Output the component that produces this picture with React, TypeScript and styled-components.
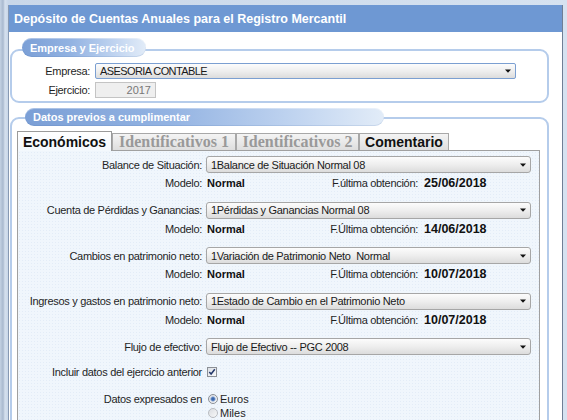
import styled, { createGlobalStyle } from 'styled-components';

const GlobalStyle = createGlobalStyle`
  html, body {
    margin: 0;
    padding: 0;
  }
  body {
    width: 567px;
    height: 420px;
    overflow: hidden;
    font-family: 'Liberation Sans', Arial, sans-serif;
    font-size: 11px;
    color: #1f1f1f;
    background: #d3dfee;
  }
  * {
    box-sizing: border-box;
  }
`;

const Frame = styled.div`
  height: 420px;
  padding: 5px 4px 0 8px;
  background: linear-gradient(to right, #c3d1e3 0, #a9b9cf 3px, #d5e0ee 5px, #c9d7e9 8px, #d6e2f0 100%);
`;

const Dialog = styled.div`
  height: 415px;
  display: flex;
  flex-direction: column;
  background: #fff;
  border-left: 1px solid #8799b3;
  border-right: 1px solid #6f7f95;
  overflow: hidden;
`;

const TitleBar = styled.div`
  height: 27px;
  flex-shrink: 0;
  display: flex;
  align-items: center;
  padding-left: 5px;
  background: #6e98d3;
  color: #fff;
  font-size: 12.5px;
  font-weight: bold;
`;

const Body = styled.div`
  display: flex;
  flex-direction: column;
  gap: 14px;
  padding: 17px 13px 0 1px;
`;

const Group = styled.section<{ $grow?: boolean }>`
  border: 2px solid #b5cceb;
  border-radius: 9px;
  background: #fff;
  flex-grow: ${({ $grow }) => ($grow ? 1 : 0)};
  min-height: ${({ $grow }) => ($grow ? '320px' : 'auto')};
`;

const Legend = styled.div<{ $width: number; $offset: number; $lift: number; $height: number }>`
  width: ${({ $width }) => $width}px;
  height: ${({ $height }) => $height}px;
  margin: -${({ $lift }) => $lift}px 0 0 ${({ $offset }) => $offset}px;
  padding-left: 8px;
  display: flex;
  align-items: center;
  border-radius: 10px;
  background: linear-gradient(90deg, #7b9fd6 0%, #93b3e2 40%, #c0d4f0 75%, #e2ecf8 100%);
  box-shadow: inset 0 1px 0 rgba(255, 255, 255, 0.35), inset 0 -1px 0 rgba(70, 110, 170, 0.15);
  color: #fff;
  font-size: 11px;
  font-weight: bold;
  white-space: nowrap;
`;

const FormGrid = styled.div`
  display: grid;
  grid-template-columns: 78px 421px;
  column-gap: 5px;
  row-gap: 3px;
  align-items: center;
  margin-top: 6px;
  padding-bottom: 3px;
`;

const FieldLabel = styled.span`
  text-align: right;
  white-space: nowrap;
  line-height: 14px;
  letter-spacing: -0.3px;
`;

const SelectBox = styled.div<{ $height: number; $focused?: boolean }>`
  height: ${({ $height }) => $height}px;
  display: flex;
  align-items: center;
  justify-content: space-between;
  padding: 0 4px;
  border: 1px solid ${({ $focused }) => ($focused ? '#7b9fd1' : '#a6a6a6')};
  border-radius: ${({ $focused }) => ($focused ? '2px' : '3px')};
  background: linear-gradient(#fcfcfc 0%, #eeeeee 50%, #dcdcdc 100%);
  color: #1a1a1a;
`;

const SelectText = styled.span<{ $tight?: boolean }>`
  white-space: pre;
  line-height: 14px;
  letter-spacing: ${({ $tight }) => ($tight ? '-0.6px' : '-0.3px')};
`;

const YearInput = styled.div`
  width: 61px;
  height: 16px;
  padding-right: 4px;
  border: 1px solid #c4c4c4;
  background: #efefef;
  color: #777;
  text-align: right;
  line-height: 14px;
`;

const GroupInner = styled.div`
  padding: 0 7px 0 5px;
`;

const TabBar = styled.div`
  display: flex;
  align-items: flex-end;
  margin-top: 5px;
`;

const Tab = styled.div<{ $width: number; $active?: boolean; $disabled?: boolean }>`
  position: relative;
  z-index: ${({ $active }) => ($active ? 1 : 0)};
  width: ${({ $width }) => $width}px;
  height: ${({ $active }) => ($active ? 20 : 17)}px;
  margin-bottom: ${({ $active }) => ($active ? -1 : 0)}px;
  display: flex;
  align-items: center;
  justify-content: center;
  border: 1px solid ${({ $active }) => ($active ? '#9a9a9a' : '#a8a8a8')};
  border-bottom: none;
  background: ${({ $active }) =>
    $active ? 'linear-gradient(#ffffff, #f3f8fd)' : 'linear-gradient(#f4f4f4, #dedede)'};
  color: ${({ $disabled }) => ($disabled ? '#999' : '#111')};
  font-family: ${({ $disabled }) =>
    $disabled ? "'Liberation Serif', 'Times New Roman', serif" : "'Liberation Sans', Arial, sans-serif"};
  font-size: ${({ $disabled }) => ($disabled ? 16 : 14)}px;
  font-weight: bold;
  white-space: nowrap;
`;

const Panel = styled.div`
  display: flex;
  flex-direction: column;
  min-height: 280px;
  padding: 5px 7px 0 0;
  border: 1px solid #a0a0a0;
  background-color: #f0f6fc;
  background-image: radial-gradient(#e3ecf7 0.6px, transparent 0.8px);
  background-size: 3px 3px;
`;

const Row = styled.div<{ $gap: number; $top?: boolean }>`
  display: grid;
  grid-template-columns: 184px 325px;
  column-gap: 4px;
  align-items: ${({ $top }) => ($top ? 'start' : 'center')};
  margin-top: ${({ $gap }) => $gap}px;
`;

const InfoValues = styled.div`
  display: grid;
  grid-template-columns: 60px 152px auto;
  align-items: center;
  height: 14px;
`;

const Strong = styled.span`
  font-weight: bold;
  color: #111;
  padding-left: 1px;
`;

const InfoLabel = styled.span`
  text-align: right;
  white-space: nowrap;
  letter-spacing: -0.3px;
`;

const DateValue = styled.span`
  margin-left: 6px;
  font-size: 12.5px;
  font-weight: bold;
  color: #111;
`;

const CheckWrap = styled.div`
  height: 14px;
  display: flex;
  align-items: center;
  padding-left: 1px;
`;

const RadioList = styled.div`
  display: flex;
  flex-direction: column;
`;

const RadioItem = styled.div`
  height: 14px;
  display: flex;
  align-items: center;
  gap: 2px;
  padding-left: 2px;
`;

function Arrow() {
  return (
    <svg width="6" height="4" viewBox="0 0 6 4">
      <path d="M0 0.5 H6 L3 3.8 Z" fill="#111" />
    </svg>
  );
}

function Select({
  value,
  height = 17,
  focused,
  tight,
}: {
  value: string;
  height?: number;
  focused?: boolean;
  tight?: boolean;
}) {
  return (
    <SelectBox $height={height} $focused={focused}>
      <SelectText $tight={tight}>{value}</SelectText>
      <Arrow />
    </SelectBox>
  );
}

function CheckBox() {
  return (
    <svg width="10" height="10" viewBox="0 0 10 10">
      <defs>
        <linearGradient id="cbg" x1="0" y1="0" x2="1" y2="1">
          <stop offset="0" stopColor="#d9dde3" />
          <stop offset="1" stopColor="#fbfbfb" />
        </linearGradient>
      </defs>
      <rect x="0.5" y="0.5" width="9" height="9" fill="url(#cbg)" stroke="#8b8f95" />
      <path d="M2.3 5 L4.1 7 L7.8 2.3" fill="none" stroke="#24386a" strokeWidth="1.5" />
    </svg>
  );
}

function Radio({ checked }: { checked?: boolean }) {
  return (
    <svg width="10" height="10" viewBox="0 0 10 10">
      <defs>
        <linearGradient id="rbg" x1="0" y1="0" x2="1" y2="1">
          <stop offset="0" stopColor="#d8dbe0" />
          <stop offset="1" stopColor="#fafafa" />
        </linearGradient>
      </defs>
      <circle cx="5" cy="5" r="4.5" fill="url(#rbg)" stroke={checked ? '#8a8f96' : '#b9bcc1'} />
      {checked && <circle cx="5" cy="5" r="2.3" fill="#3c68ad" stroke="#9bb6de" strokeWidth="0.8" />}
    </svg>
  );
}

const reports = [
  { label: 'Balance de Situación:', value: '1Balance de Situación Normal 08', obt: 'F.última obtención:', date: '25/06/2018' },
  { label: 'Cuenta de Pérdidas y Ganancias:', value: '1Pérdidas y Ganancias Normal 08', obt: 'F.Última obtención:', date: '14/06/2018' },
  { label: 'Cambios en patrimonio neto:', value: '1Variación de Patrimonio Neto  Normal', obt: 'F.Última obtención:', date: '10/07/2018' },
  { label: 'Ingresos y gastos en patrimonio neto:', value: '1Estado de Cambio en el Patrimonio Neto', obt: 'F.Última obtención:', date: '10/07/2018' },
];

export default function App() {
  return (
    <>
      <GlobalStyle />
      <Frame>
        <Dialog>
          <TitleBar>Depósito de Cuentas Anuales para el Registro Mercantil</TitleBar>
          <Body>
            <Group>
              <Legend $width={124} $offset={10} $lift={13} $height={19}>
                Empresa y Ejercicio
              </Legend>
              <FormGrid>
                <FieldLabel>Empresa:</FieldLabel>
                <Select value="ASESORIA CONTABLE" height={16} focused tight />
                <FieldLabel>Ejercicio:</FieldLabel>
                <YearInput>2017</YearInput>
              </FormGrid>
            </Group>

            <Group $grow>
              <Legend $width={359} $offset={13} $lift={11} $height={18}>
                Datos previos a cumplimentar
              </Legend>
              <GroupInner>
                <TabBar>
                  <Tab $width={95} $active>
                    Económicos
                  </Tab>
                  <Tab $width={124} $disabled>
                    Identificativos 1
                  </Tab>
                  <Tab $width={123} $disabled>
                    Identificativos 2
                  </Tab>
                  <Tab $width={90}>Comentario</Tab>
                </TabBar>
                <Panel>
                  {reports.map((r, i) => (
                    <div key={r.label}>
                      <Row $gap={i === 0 ? 0 : 11.5}>
                        <FieldLabel>{r.label}</FieldLabel>
                        <Select value={r.value} />
                      </Row>
                      <Row $gap={3}>
                        <FieldLabel>Modelo:</FieldLabel>
                        <InfoValues>
                          <Strong>Normal</Strong>
                          <InfoLabel>{r.obt}</InfoLabel>
                          <DateValue>{r.date}</DateValue>
                        </InfoValues>
                      </Row>
                    </div>
                  ))}
                  <Row $gap={11.5}>
                    <FieldLabel>Flujo de efectivo:</FieldLabel>
                    <Select value="Flujo de Efectivo -- PGC 2008" />
                  </Row>
                  <Row $gap={10}>
                    <FieldLabel>Incluir datos del ejercicio anterior</FieldLabel>
                    <CheckWrap>
                      <CheckBox />
                    </CheckWrap>
                  </Row>
                  <Row $gap={13} $top>
                    <FieldLabel>Datos expresados en</FieldLabel>
                    <RadioList>
                      <RadioItem>
                        <Radio checked />
                        <span>Euros</span>
                      </RadioItem>
                      <RadioItem>
                        <Radio />
                        <span>Miles</span>
                      </RadioItem>
                    </RadioList>
                  </Row>
                </Panel>
              </GroupInner>
            </Group>
          </Body>
        </Dialog>
      </Frame>
    </>
  );
}
